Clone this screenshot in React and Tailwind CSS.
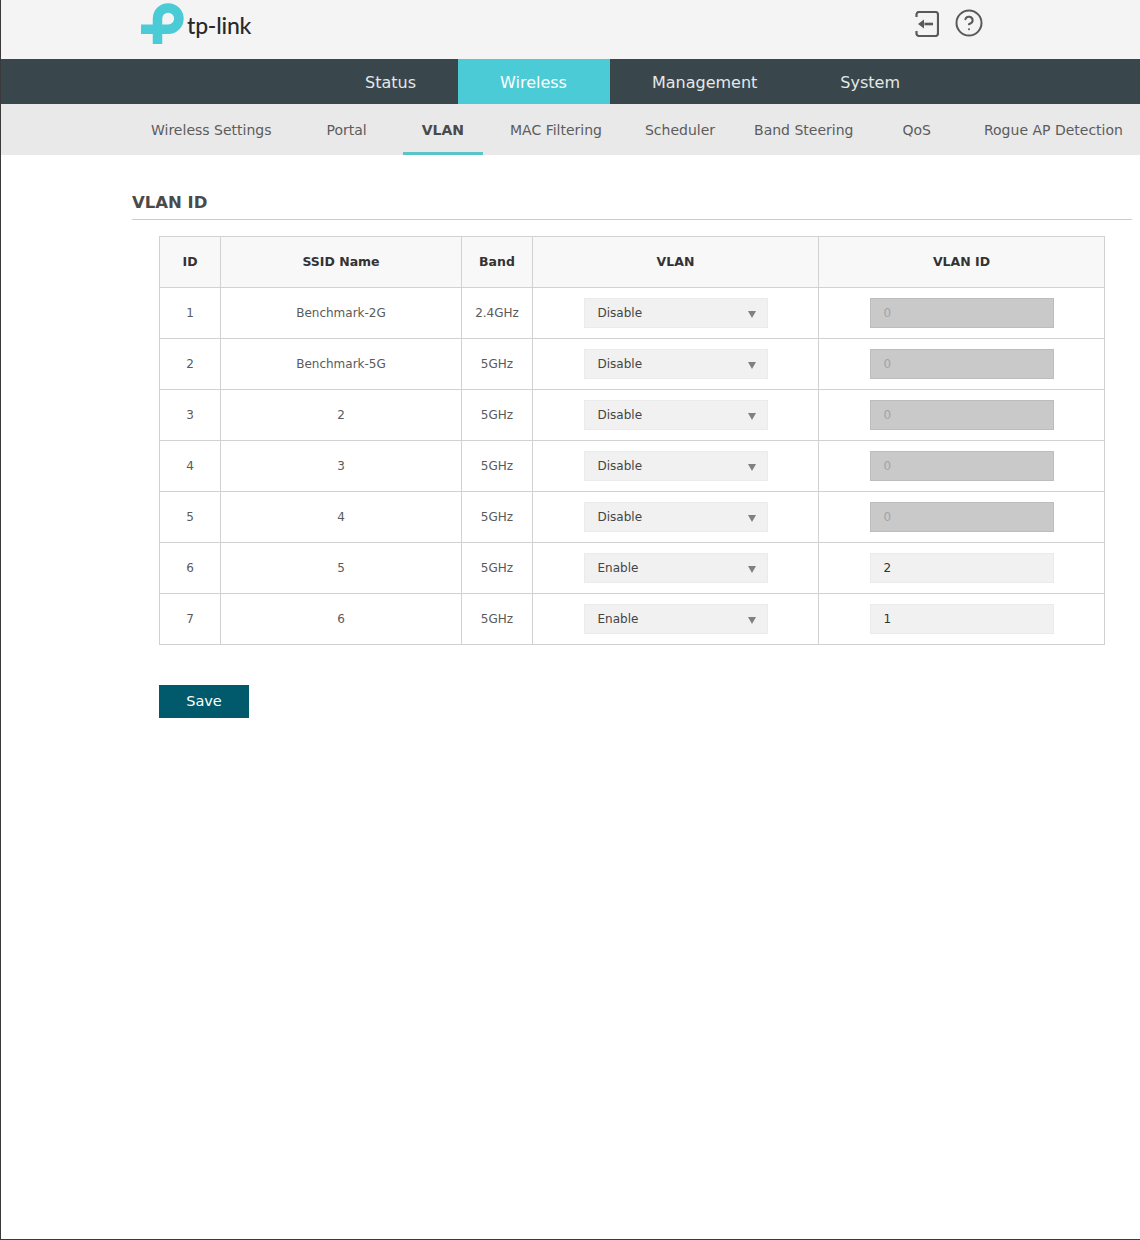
import { CircleHelp } from 'lucide-react';

const mainTabs = [
  { label: 'Status', cls: 'px-[42px]' },
  { label: 'Wireless', cls: 'pl-[42px] pr-[43px]', active: true },
  { label: 'Management', cls: 'pl-[42px] pr-[41px]' },
  { label: 'System', cls: 'px-[42px]' },
];

const subTabs = [
  { label: 'Wireless Settings', cls: 'ml-[131px] px-[19px]' },
  { label: 'Portal', cls: 'ml-[17px] px-[19px]' },
  { label: 'VLAN', cls: 'ml-[17px] px-[19px]', active: true },
  { label: 'MAC Filtering', cls: 'ml-[8px] px-[19px]' },
  { label: 'Scheduler', cls: 'ml-[5px] px-[19px]' },
  { label: 'Band Steering', cls: 'ml-[1px] px-[19px]' },
  { label: 'QoS', cls: 'ml-[11px] px-[19px]' },
  { label: 'Rogue AP Detection', cls: 'ml-[15px] px-[19px]' },
];

const rows = [
  { id: 1, ssid: 'Benchmark-2G', band: '2.4GHz', vlan: 'Disable', vlanId: '0' },
  { id: 2, ssid: 'Benchmark-5G', band: '5GHz', vlan: 'Disable', vlanId: '0' },
  { id: 3, ssid: '2', band: '5GHz', vlan: 'Disable', vlanId: '0' },
  { id: 4, ssid: '3', band: '5GHz', vlan: 'Disable', vlanId: '0' },
  { id: 5, ssid: '4', band: '5GHz', vlan: 'Disable', vlanId: '0' },
  { id: 6, ssid: '5', band: '5GHz', vlan: 'Enable', vlanId: '2' },
  { id: 7, ssid: '6', band: '5GHz', vlan: 'Enable', vlanId: '1' },
];

function Logo() {
  return (
    <div className="w-[112px] flex items-center">
      <svg width="46" height="46" viewBox="140 0 46 46" className="shrink-0">
        <path d="M157.5 44V18.5A10.7 10.7 0 1 1 168.2 29.3H141" fill="none" stroke="#4acbd6" strokeWidth="9.5" />
      </svg>
      <span className="ml-[1px] mt-[4px] font-['Lato',sans-serif] text-[23px] leading-none font-medium tracking-[-0.2px] text-[#26292b]">tp-link</span>
    </div>
  );
}

function ExitIcon() {
  return (
    <svg width="24" height="26" viewBox="0 0 24 26" fill="none" stroke="#595959" strokeWidth="2.2">
      <path d="M1.5 6V3.5A2.5 2.5 0 0 1 4 1H20.5A2.5 2.5 0 0 1 23 3.5V22.5A2.5 2.5 0 0 1 20.5 25H4A2.5 2.5 0 0 1 1.5 22.5V20" />
      <path d="M9.5 13H18" strokeWidth="2.6" />
      <path d="M3 13L9 8.5V17.5Z" fill="#595959" stroke="none" />
    </svg>
  );
}

export default function App() {
  return (
    <div className="w-[1140px] h-[1240px] flex flex-col bg-white border-l border-[#3a3a3a] font-['DejaVu_Sans',sans-serif] text-[#555]">
      <div className="h-[59px] bg-[#f4f4f4] flex items-start pl-[139px]">
        <Logo />
        <div className="ml-[663px] mt-[11px]"><ExitIcon /></div>
        <CircleHelp className="ml-[15px] mt-[8px] text-[#595959]" size={30} strokeWidth={1.6} />
      </div>

      <div className="h-[45px] bg-[#39464c] flex pl-[322px] text-[16px] text-[#e4e8e9]">
        {mainTabs.map((tab) => (
          <div key={tab.label} className={`${tab.cls} pt-[2px] flex items-center ${tab.active ? 'bg-[#4acbd6] text-white' : ''}`}>
            {tab.label}
          </div>
        ))}
      </div>

      <div className="h-[51px] bg-[#e9e9e9] flex text-[14px] text-[#5c5c5c]">
        {subTabs.map((tab) => (
          <div
            key={tab.label}
            className={`${tab.cls} pt-[5px] flex items-center whitespace-nowrap border-b-[3px] ${tab.active ? 'border-[#5cc3c8] font-bold text-[#4a4a4a]' : 'border-transparent'}`}
          >
            {tab.label}
          </div>
        ))}
      </div>

      <div className="flex-1 border-b border-[#3a3a3a] pl-[131px] pr-[8px] pt-[38px]">
        <h2 className="h-[27px] border-b border-[#cccccc] text-[16.5px] leading-[20px] font-bold text-[#4a4a4a]">VLAN ID</h2>

        <div className="ml-[27px] mt-[16px]">
          <table className="w-[946px] table-fixed border-collapse text-[12px]">
            <thead>
              <tr className="h-[51px] bg-[#f8f8f8] text-[12.5px] text-[#333]">
                <th className="w-[61px] border border-[#d2d2d2] font-bold">ID</th>
                <th className="w-[241px] border border-[#d2d2d2] font-bold">SSID Name</th>
                <th className="w-[71px] border border-[#d2d2d2] font-bold">Band</th>
                <th className="w-[286px] border border-[#d2d2d2] font-bold">VLAN</th>
                <th className="border border-[#d2d2d2] font-bold">VLAN ID</th>
              </tr>
            </thead>
            <tbody>
              {rows.map((row) => (
                <tr key={row.id} className="h-[51px] text-center text-[#5a5a5a]">
                  <td className="border border-[#d2d2d2]">{row.id}</td>
                  <td className="border border-[#d2d2d2]">{row.ssid}</td>
                  <td className="border border-[#d2d2d2]">{row.band}</td>
                  <td className="border border-[#d2d2d2]">
                    <div className="mx-auto w-[184px] h-[30px] flex items-center justify-between bg-[#f1f1f1] border border-[#ebebeb] pl-[13px] pr-[11px] text-[#444]">
                      <span>{row.vlan}</span>
                      <span className="mt-[3px] w-0 h-0 border-x-[4px] border-x-transparent border-t-[7px] border-t-[#808080]" />
                    </div>
                  </td>
                  <td className="border border-[#d2d2d2]">
                    <div
                      className={`mx-auto w-[184px] h-[30px] flex items-center pl-[13px] border text-left ${
                        row.vlan === 'Disable'
                          ? 'bg-[#c9c9c9] border-[#bdbdbd] text-[#a3a3a3]'
                          : 'bg-[#f1f1f1] border-[#ebebeb] text-[#333]'
                      }`}
                    >
                      {row.vlanId}
                    </div>
                  </td>
                </tr>
              ))}
            </tbody>
          </table>

          <button type="button" className="mt-[40px] w-[90px] h-[33px] bg-[#005a6b] text-white text-[14.5px]">Save</button>
        </div>
      </div>
    </div>
  );
}
